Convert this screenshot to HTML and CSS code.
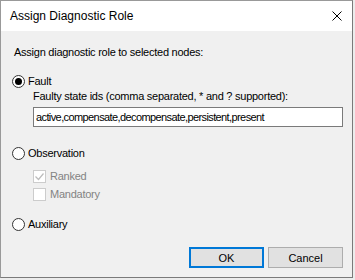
FILE: index.html
```html
<!DOCTYPE html>
<html lang="en">
<head>
  <meta charset="UTF-8" />
  <title>Assign Diagnostic Role</title>
  <link rel="stylesheet" href="styles.css">
</head>
<body>

  <div class="window">
    <!-- Title bar -->
    <div class="titlebar">
      <span class="title">Assign Diagnostic Role</span>
      <span class="close-btn">
        <svg width="10" height="10" viewBox="0 0 10 10">
          <path d="M0.5 0.5 L9.5 9.5 M9.5 0.5 L0.5 9.5" stroke="#000" stroke-width="1" fill="none" />
        </svg>
      </span>
    </div>

    <!-- Content -->
    <div class="content">
      <div class="intro">Assign diagnostic role to selected nodes:</div>

      <label class="radio-row row-fault">
        <span class="radio checked"></span>
        <span>Fault</span>
      </label>
      <div class="sub">
        <div class="field-label">Faulty state ids (comma separated, * and ? supported):</div>
        <div class="text-input">active,compensate,decompensate,persistent,present</div>
      </div>

      <label class="radio-row row-obs">
        <span class="radio"></span>
        <span>Observation</span>
      </label>
      <div class="sub">
        <label class="check-row row-ranked disabled">
          <span class="checkbox">
            <svg width="11" height="11" viewBox="0 0 11 11">
              <path d="M1.5 5.5 L4.5 8.5 L9.5 2.5" stroke="#bcbcbc" stroke-width="1.2" fill="none" />
            </svg>
          </span>
          <span>Ranked</span>
        </label>
        <label class="check-row row-mand disabled">
          <span class="checkbox"></span>
          <span>Mandatory</span>
        </label>
      </div>

      <label class="radio-row row-aux">
        <span class="radio"></span>
        <span>Auxiliary</span>
      </label>

      <div class="buttons">
        <button class="btn default">OK</button>
        <button class="btn">Cancel</button>
      </div>
    </div>
  </div>

</body>
</html>
```

FILE: styles.css
```css
/* Base */
html, body {
  margin: 0; padding: 0;
  background: #ececec;
  font-family: 'Liberation Sans', Arial, sans-serif;
  font-size: 11px;
  color: #000;
}
.window {
  width: 353px;
  height: 278px;
  box-sizing: border-box;
  border: 1px solid #999;
  border-right-color: #7a7a7a;
  border-bottom-color: #7a7a7a;
  background: #f0f0f0;
  display: flex;
  flex-direction: column;
}

/* Title bar */
.titlebar {
  height: 30px;
  background: #fff;
  display: flex;
  align-items: center;
  padding-left: 9px;
}
.title {
  flex: 1;
  font-size: 12px;
}
.close-btn {
  display: flex;
  margin-right: 10px;
}

/* Content */
.content {
  padding: 13px 9px 0 11px;
  line-height: 16px;
  letter-spacing: -0.25px;
}
.intro {
  padding-left: 2px;
}
.radio-row, .check-row {
  display: flex;
  align-items: center;
  gap: 3px;
}
.row-fault { margin-top: 13px; }
.row-obs { margin-top: 18px; }
.row-ranked { margin-top: 7px; }
.row-mand { margin-top: 2px; }
.row-aux { margin-top: 14px; }

.radio {
  width: 13px;
  height: 13px;
  box-sizing: border-box;
  border: 1px solid #333;
  border-radius: 50%;
  background: #fff;
  display: flex;
  align-items: center;
  justify-content: center;
}
.radio.checked::after {
  content: '';
  width: 7px;
  height: 7px;
  border-radius: 50%;
  background: #000;
}

.sub {
  padding-left: 21px;
}
.field-label {
  line-height: 15px;
}
.text-input {
  margin-top: 3px;
  height: 20px;
  box-sizing: border-box;
  border: 1px solid #7a7a7a;
  background: #fff;
  padding: 0 2px;
  line-height: 18px;
  letter-spacing: -0.6px;
}

.check-row {
  gap: 4px;
}
.checkbox {
  width: 13px;
  height: 13px;
  box-sizing: border-box;
  border: 1px solid #cccccc;
  background: #fff;
  display: flex;
  align-items: center;
  justify-content: center;
}
.check-row.disabled {
  color: #838383;
}

/* Buttons */
.buttons {
  margin-top: 15px;
  display: flex;
  justify-content: flex-end;
  gap: 4px;
}
.btn {
  width: 75px;
  height: 21px;
  box-sizing: border-box;
  border: 1px solid #adadad;
  background: #e1e1e1;
  font-family: inherit;
  font-size: 11px;
  color: #000;
  padding: 0;
}
.btn.default {
  border: 2px solid #0078d7;
}
```
